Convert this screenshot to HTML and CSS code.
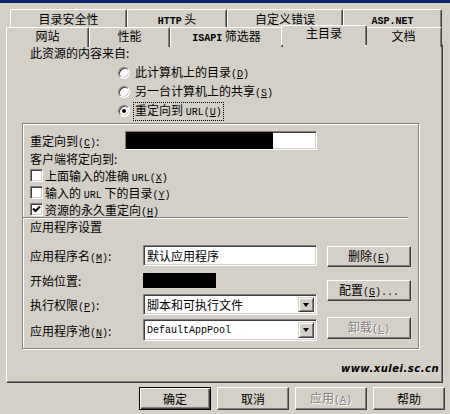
FILE: index.html
```html
<!DOCTYPE html>
<html lang="zh-CN">
<head>
<meta charset="utf-8">
<title>主目录</title>
<link rel="stylesheet" href="styles.css">
</head>
<body>
<div class="titlebar"></div>
<div class="sheet">
  <div class="tabrow row1">
    <div class="tab">目录安全性</div>
    <div class="tab"><span class="lat">HTTP</span> 头</div>
    <div class="tab">自定义错误</div>
    <div class="tab"><span class="lat">ASP.NET</span></div>
  </div>
  <div class="tabrow row2">
    <div class="tab">网站</div>
    <div class="tab">性能</div>
    <div class="tab"><span class="lat">ISAPI</span> 筛选器</div>
    <div class="tab sel">主目录</div>
    <div class="tab">文档</div>
  </div>
  <div class="panel">
    <div class="intro">此资源的内容来自:</div>
    <div class="radios">
      <div class="radio-row"><span class="radio"></span><span class="rlabel">此计算机上的目录<span class="m">(<u>D</u>)</span></span></div>
      <div class="radio-row"><span class="radio"></span><span class="rlabel">另一台计算机上的共享<span class="m">(<u>S</u>)</span></span></div>
      <div class="radio-row"><span class="radio checked"></span><span class="rlabel focus">重定向到 <span class="m">URL(<u>U</u>)</span></span></div>
    </div>
    <div class="group">
      <div class="redirect-row">
        <span class="rd-label">重定向到<span class="m">(<u>C</u>)</span>:</span>
        <span class="field rd-field"><span class="redact"></span></span>
      </div>
      <div class="line">客户端将定向到:</div>
      <div class="cb-row"><span class="cb"></span><span>上面输入的准确 <span class="m">URL(<u>X</u>)</span></span></div>
      <div class="cb-row"><span class="cb"></span><span>输入的 <span class="m">URL</span> 下的目录<span class="m">(<u>Y</u>)</span></span></div>
      <div class="cb-row last"><span class="cb"><svg width="11" height="11" viewBox="0 0 11 11"><path d="M2 4.5 L4.5 7 L9 2.5" fill="none" stroke="#000" stroke-width="2"/></svg></span><span>资源的永久重定向<span class="m">(<u>H</u>)</span></span></div>
      <div class="sep"></div>
      <div class="line">应用程序设置</div>
      <div class="app">
        <div class="app-grid">
          <span class="lbl">应用程序名<span class="m">(<u>M</u>)</span>:</span>
          <span class="field txt">默认应用程序</span>
          <span class="lbl">开始位置:</span>
          <span class="redact-box"></span>
          <span class="lbl">执行权限<span class="m">(<u>P</u>)</span>:</span>
          <span class="field sel-field"><span class="sel-text">脚本和可执行文件</span><span class="drop"><span class="tri"></span></span></span>
          <span class="lbl">应用程序池<span class="m">(<u>N</u>)</span>:</span>
          <span class="field sel-field"><span class="sel-text mono">DefaultAppPool</span><span class="drop"><span class="tri"></span></span></span>
        </div>
        <div class="app-btns">
          <button class="btn b-del">删除<span class="m">(<u>E</u>)</span></button>
          <button class="btn b-cfg">配置<span class="m">(<u>G</u>)...</span></button>
          <button class="btn b-unl dis">卸载<span class="m">(<u>L</u>)</span></button>
        </div>
      </div>
    </div>
    <div class="watermark">www.xulei.sc.cn</div>
  </div>
  <div class="buttons">
    <button class="btn big default">确定</button>
    <button class="btn big">取消</button>
    <button class="btn big dis">应用<span class="m">(<u>A</u>)</span></button>
    <button class="btn big">帮助</button>
  </div>
</div>
</body>
</html>
```

FILE: styles.css
```css
* { box-sizing: border-box; }
html, body { margin: 0; padding: 0; }
body {
  width: 450px;
  height: 414px;
  overflow: hidden;
  background: #d4d0c8;
  color: #000;
  font-family: "Noto Sans CJK SC", "Noto Sans", sans-serif;
  font-size: 12px;
}
.titlebar { height: 3px; background: #0a246a; }
.sheet { padding: 6px 7px 0 6px; }

.lat, .m, .mono {
  font-family: "Liberation Mono", "Noto Sans CJK SC", monospace;
  font-size: 10px;
}
.lat { font-weight: bold; }

.tabrow { display: grid; }
.row1 { grid-template-columns: 117px 100px 116px 99px; margin-left: 4px; height: 18px; }
.row2 { grid-template-columns: 83px 81px 113px 82px 77px; height: 17px; position: relative; z-index: 1; }
.tab {
  background: #d4d0c8;
  border-top: 1px solid #fff;
  border-left: 1px solid #fff;
  border-right: 1px solid #404040;
  box-shadow: inset -1px 0 0 #808080;
  border-radius: 2px 2px 0 0;
  text-align: center;
  white-space: nowrap;
}
.row1 .tab { line-height: 17px; }
.row2 .tab { line-height: 16px; }
.row2 .tab.sel {
  position: relative;
  top: -2px;
  height: 20px;
  margin: 0 -2px;
  line-height: 13px;
  z-index: 2;
}

.panel {
  height: 339px;
  padding: 0 0 0 23px;
  border-top: 1px solid #fff;
  border-left: 1px solid #fff;
  border-right: 1px solid #404040;
  border-bottom: 1px solid #404040;
  box-shadow: inset -1px -1px 0 #808080;
}
.intro { line-height: 16px; }
.radios { margin: 3px 0 0 88px; }
.radio-row { display: flex; align-items: center; height: 18px; margin-bottom: 1px; }
.radio {
  width: 12px; height: 12px;
  border-radius: 50%;
  background: #fff;
  border: 1px solid;
  border-color: #808080 #fff #fff #808080;
  box-shadow: inset 1px 1px 0 #404040, inset -1px -1px 0 #d4d0c8;
  display: flex; align-items: center; justify-content: center;
}
.radio.checked::after {
  content: "";
  width: 4px; height: 4px;
  border-radius: 50%;
  background: #000;
}
.rlabel {
  margin-left: 3px;
  padding: 0 1px;
  line-height: 14px;
  border: 1px dotted transparent;
}
.rlabel.focus { border-color: #000; }

.group {
  margin: 3px 0 0 -8px;
  width: 397px;
  padding: 7px;
  border: 1px solid #808080;
  box-shadow: inset 1px 1px 0 #fff, 1px 1px 0 #fff;
}
.redirect-row { display: flex; height: 19px; align-items: center; }
.rd-label { width: 95px; }
.field {
  background: #fff;
  border: 1px solid;
  border-color: #808080 #fff #fff #808080;
  box-shadow: inset 1px 1px 0 #404040, inset -1px -1px 0 #d4d0c8;
}
.rd-field { width: 192px; height: 19px; display: flex; }
.redact { width: 147px; height: 100%; background: #000; }
.line { line-height: 16px; margin-top: 1px; }
.cb-row { display: flex; align-items: center; height: 17px; }
.cb-row.last { height: 16px; }
.cb {
  width: 13px; height: 13px;
  margin-right: 2px;
  background: #fff;
  border: 1px solid;
  border-color: #808080 #fff #fff #808080;
  box-shadow: inset 1px 1px 0 #404040, inset -1px -1px 0 #d4d0c8;
  display: flex; align-items: center; justify-content: center;
}
.cb svg { display: block; }
.sep {
  margin: 0 3px 0 -7px;
  height: 2px;
  border-top: 1px solid #808080;
  border-bottom: 1px solid #fff;
}
.sep + .line { margin-top: 0; }

.app { display: flex; gap: 10px; margin-top: 10px; }
.app-grid {
  display: grid;
  grid-template-columns: 113px 174px;
  grid-template-rows: 21px 20px 21px 22px;
  row-gap: 4px;
  align-items: center;
}
.lbl { white-space: nowrap; }
.txt { height: 21px; line-height: 19px; padding-left: 3px; }
.redact-box { width: 73px; height: 15px; background: #000; }
.sel-field { height: 100%; display: flex; align-items: center; padding: 2px; }
.sel-text { flex: 1; padding-left: 1px; }
.sel-text.mono { font-size: 10px; }
.drop {
  width: 16px; height: 100%;
  background: #d4d0c8;
  border: 1px solid;
  border-color: #d4d0c8 #404040 #404040 #d4d0c8;
  box-shadow: inset 1px 1px 0 #fff, inset -1px -1px 0 #808080;
  display: flex; align-items: center; justify-content: center;
}
.tri {
  width: 0; height: 0;
  border-left: 3.5px solid transparent;
  border-right: 3.5px solid transparent;
  border-top: 4px solid #000;
}

.app-btns { display: flex; flex-direction: column; width: 85px; }
.btn {
  font-family: "Noto Sans CJK SC", "Noto Sans", sans-serif;
  font-size: 12px;
  color: #000;
  background: #d4d0c8;
  border: 1px solid;
  border-color: #fff #404040 #404040 #fff;
  box-shadow: inset -1px -1px 0 #808080, inset 1px 1px 0 #d4d0c8;
  padding: 0;
  margin: 0;
  line-height: 1;
}
.b-del { height: 21px; margin-top: 1px; }
.b-cfg { height: 21px; margin-top: 13px; }
.b-unl { height: 22px; margin-top: 16px; }
.dis { color: #808080; text-shadow: 1px 1px 0 #fff; }

.watermark {
  margin: 12px 3px 0 0;
  line-height: 16px;
  text-align: right;
  font-family: "DejaVu Sans", sans-serif;
  font-style: italic;
  font-weight: bold;
  font-size: 10px;
  letter-spacing: 0.5px;
}

.buttons {
  display: flex;
  justify-content: flex-end;
  gap: 6px;
  margin: 4px -2px 0 0;
}
.btn.big { width: 72px; height: 23px; }
.btn.default {
  border: 1px solid #000;
  box-shadow: inset 1px 1px 0 #fff, inset -1px -1px 0 #404040, inset -2px -2px 0 #808080;
}
```
